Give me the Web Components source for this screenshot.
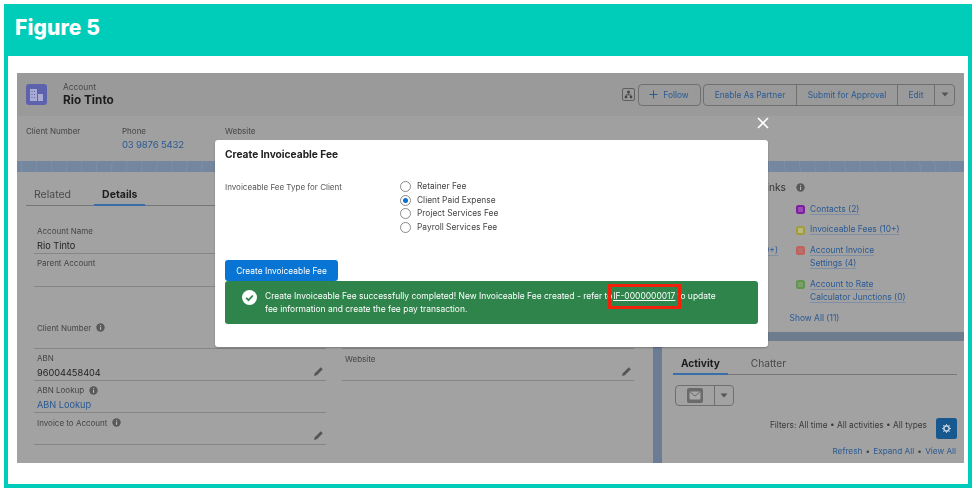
<!DOCTYPE html>
<html lang="en"><head><meta charset="utf-8"><title>Figure 5</title>
<style>
html,body{margin:0;padding:0;background:#fff}
body{font-family:Inter,"Liberation Sans",sans-serif;width:976px;height:492px;overflow:hidden}
</style></head><body>
<fig-frame heading="Figure 5">
  <sf-app>
    <sf-record-header slot="header" type="Account" name="Rio Tinto"></sf-record-header>
    <sf-highlights slot="highlights"></sf-highlights>
    <sf-details slot="left"></sf-details>
    <sf-quick-links slot="rtop"></sf-quick-links>
    <sf-activity slot="rbottom"></sf-activity>
    <sf-modal slot="modal"></sf-modal>
  </sf-app>
</fig-frame>
<script>
const ICON={
 info:'<svg width="9" height="9" viewBox="0 0 9 9"><circle cx="4.5" cy="4.5" r="4.2" fill="#5a5a5a"/><rect x="4" y="4" width="1.1" height="2.8" fill="#bdbdbd"/><rect x="4" y="2.2" width="1.1" height="1.1" fill="#bdbdbd"/></svg>',
 pencil:'<svg width="11" height="11" viewBox="0 0 11 11"><path d="M7.8 1.2l2 2-6 6-2.8.8.8-2.8z" fill="#555"/></svg>',
 caret:'<svg width="8" height="5" viewBox="0 0 8 5"><path d="M.5.5h7L4 4.6z" fill="#555"/></svg>'
};
function def(name,html){
  customElements.define(name,class extends HTMLElement{
    connectedCallback(){
      if(this.shadowRoot)return;
      const r=this.attachShadow({mode:'open'});
      r.innerHTML=typeof html==='function'?html(this):html;
    }
  });
}
def('fig-frame',h=>`<style>
:host{display:flex;flex-direction:column;box-sizing:border-box;margin:4px;width:968px;height:484px;border:4px solid #00cdb9;background:#fff}
header{height:48px;background:#00cdb9;color:#fff;font:800 21px/40px Inter,sans-serif;letter-spacing:.1px;padding:0 0 0 7px;flex:none;box-sizing:border-box}
.b{flex:1;padding:17px 4px 21px 9px;min-height:0}
</style><header>${h.getAttribute('heading')}</header><div class="b"><slot></slot></div>`);

def('sf-app',`<style>
:host{display:grid;grid-template-columns:636px 9px 302px;grid-template-rows:43px 45px 11px 160px 9px 122px;height:390px;width:947px;position:relative;background:#6c7c94;color:#333;overflow:hidden;filter:blur(.5px);font:8.4px/12px Inter,sans-serif}
::slotted([slot=header]){grid-column:1/4;grid-row:1}
::slotted([slot=highlights]){grid-column:1/4;grid-row:2}
::slotted([slot=left]){grid-column:1;grid-row:4/7}
::slotted([slot=rtop]){grid-column:3;grid-row:4}
::slotted([slot=rbottom]){grid-column:3;grid-row:6}
.band{grid-column:1/4;grid-row:3;background:repeating-radial-gradient(circle at 40% 200%,#75869f 0 14px,#7c8da5 14px 15px)}
.col{grid-column:2;grid-row:4/7;background:#6c7c94}
.band2{grid-column:3;grid-row:5;background:#6e7d8e}
</style><slot name="header"></slot><slot name="highlights"></slot><div class="band"></div><div class="col"></div><div class="band2"></div><slot name="left"></slot><slot name="rtop"></slot><slot name="rbottom"></slot><slot name="modal"></slot>`);

def('sf-btn',`<style>
:host{display:flex;align-items:center;justify-content:center;box-sizing:border-box;height:20px;border-left:1px solid #6f6f6f;color:#2a5a94;font:8.4px/12px Inter,sans-serif;white-space:nowrap}
:host(:first-child){border-left:0}
</style><slot></slot>`);
def('sf-btn-group',`<style>
:host{display:flex;box-sizing:border-box;height:22px;border:1px solid #6f6f6f;border-radius:4px}
</style><slot></slot>`);

def('sf-record-header',h=>`<style>
:host{display:flex;align-items:center;background:#9a9a9a;padding:0 9px 0 9px;gap:16px}
.ic{width:21px;height:21px;flex:none;border-radius:3px;background:#5d62ad;display:flex;align-items:center;justify-content:center}
.t{flex:1;display:flex;flex-direction:column}
.a{font-size:8.4px;line-height:11px;color:#4a4a4a}
.n{font-size:11.8px;line-height:14px;font-weight:700;color:#1d1d1d}
.acts{display:flex;align-items:center;gap:2.5px}
.h{width:13px;height:13px;box-sizing:border-box;border:1px solid #5f5f5f;border-radius:2px;display:flex;align-items:center;justify-content:center}
</style>
<div class="ic"><svg width="13" height="12" viewBox="0 0 13 12" fill="#a9abd4"><path d="M0 0h7v12H0z"/><path d="M8 5h5v7H8z"/><path d="M1.5 2h1v1h-1zM4 2h1v1H4zM1.5 5h1v1h-1zM4 5h1v1H4zM1.5 8h1v1h-1zM4 8h1v1H4z" fill="#5d62ad"/></svg></div>
<div class="t"><span class="a">${h.getAttribute('type')}</span><span class="n">${h.getAttribute('name')}</span></div>
<div class="acts">
<div class="h"><svg width="9" height="9" viewBox="0 0 9 9" fill="#444"><path d="M3.2.8h2.6v2.4H3.2zM.8 5.8h2.4v2.4H.8zM5.8 5.8h2.4v2.4H5.8z"/><path d="M4.2 3h.6v1.6h2.4v1.4h-.6V5.2H2.4V6h-.6V4.6h2.4z"/></svg></div>
<sf-btn-group style="width:63px"><sf-btn style="width:100%;gap:5px"><svg width="9" height="9" viewBox="0 0 9 9"><path d="M4.5.5v8M.5 4.5h8" stroke="#2a5a94" stroke-width="1"/></svg>Follow</sf-btn></sf-btn-group>
<sf-btn-group><sf-btn style="width:92px">Enable As Partner</sf-btn><sf-btn style="width:101px">Submit for Approval</sf-btn><sf-btn style="width:37px">Edit</sf-btn><sf-btn style="width:20px">${ICON.caret}</sf-btn></sf-btn-group>
</div>`);

def('sf-highlight',h=>`<style>
:host{display:flex;flex-direction:column}
.l{font-size:8px;line-height:12px;color:#444;height:13px;box-sizing:border-box}
.v{font-size:9.6px;letter-spacing:-.2px;line-height:13px;color:#2a5a94}
</style><span class="l">${h.getAttribute('label')}</span><span class="v"><slot></slot></span>`);
def('sf-highlights',`<style>
:host{display:grid;grid-template-columns:96px 103px 1fr;background:#a0a0a0;padding:9px 9px 0}
</style><sf-highlight label="Client Number"></sf-highlight><sf-highlight label="Phone">03 9876 5432</sf-highlight><sf-highlight label="Website"></sf-highlight>`);

def('sf-tabs',h=>{const items=h.getAttribute('items').split(',');return `<style>
:host{display:flex;gap:15px;border-bottom:1px solid #767676;height:26px;box-sizing:border-box}
span{height:26px;box-sizing:border-box;padding:7.5px 8px 0;font:${h.getAttribute('fs')||10.2}px/13px Inter,sans-serif;color:#4a4a4a}
span.on{font-weight:700;color:#1d1d1d;border-bottom:2px solid #3a6ea8}
</style>${items.map((t,i)=>`<span class="${i==h.getAttribute('active')?'on':''}">${t}</span>`).join('')}`});

def('sf-field',h=>`<style>
:host{display:block;box-sizing:border-box;height:32px;border-bottom:1px solid #868686;padding:3.5px 3px 0;position:relative}
.l{display:flex;align-items:center;gap:5px;height:12px;font-size:8px;line-height:12px;color:#444}
.v{display:block;font-size:9.2px;line-height:13px;margin-top:2px;color:#222}
.v.link{color:#2a5a94}
.e{position:absolute;right:2px;bottom:3px;line-height:0}
</style><div class="l">${h.getAttribute('label')||''}${h.hasAttribute('info')?ICON.info:''}</div><span class="v ${h.hasAttribute('link')?'link':''}"><slot></slot></span>${h.hasAttribute('edit')?`<span class="e">${ICON.pencil}</span>`:''}`);

def('sf-details',`<style>
:host{display:block;background:#a2a2a2;padding:8px 19px 0 9px}
.g{display:grid;grid-template-columns:292px 292px;column-gap:16px;margin:16px 0 0 8px}
.t{padding-top:3px}
</style><sf-tabs items="Related,Details" active="1" fs="10.5"></sf-tabs>
<div class="g">
<sf-field label="Account Name" style="padding-top:3px">Rio Tinto</sf-field><sf-field></sf-field>
<sf-field label="Parent Account" style="height:33px;padding-top:3px"></sf-field><sf-field style="height:33px"></sf-field>
<sf-field label="Client Number" info style="height:62px;padding-top:34.5px"></sf-field><sf-field style="height:62px"></sf-field>
<sf-field label="ABN" edit style="padding-top:3px">96004458404</sf-field><sf-field label="Website" edit></sf-field>
<sf-field label="ABN Lookup" info link style="padding-top:3px">ABN Lookup</sf-field><div></div>
<sf-field label="Invoice to Account" info edit></sf-field><div></div>
</div>`);

def('sf-ql',h=>`<style>
:host{display:flex;gap:5px;align-items:flex-start;font:8.45px/13.5px Inter,sans-serif;color:#2a5a94}
i{width:9px;height:9px;border-radius:2.5px;flex:none;margin-top:2.5px;box-sizing:border-box;border:2px solid ${h.getAttribute('c')}}
span{text-decoration:underline;text-decoration-color:#7f8ea5;text-underline-offset:2px}
</style><i style="background:${h.getAttribute('f')||'#b0b0b0'}"></i><span><slot></slot></span>`);
def('sf-quick-links',`<style>
:host{display:grid;grid-template-columns:134px 1fr;grid-auto-rows:auto;row-gap:7px;background:#a2a2a2;padding:8px 0 0 0;align-content:start;font:8.45px/13.5px Inter,sans-serif}
.h{font-size:10.2px;line-height:15.7px;color:#333;text-align:right;white-space:nowrap;padding-right:10px}
.inf{line-height:0;padding-top:3px}
.lft{color:#2a5a94;text-align:right;padding-right:18px;text-decoration:underline;text-decoration-color:#7f8ea5;text-underline-offset:2px}
.sa{color:#2a5a94;grid-column:2;margin-left:-6.5px}
</style>
<div class="h">Related List Quick Links</div><div class="inf">${ICON.info}</div>
<div></div><sf-ql c="#7b1fa0" f="#9a4ab5">Contacts (2)</sf-ql>
<div></div><sf-ql c="#a09e3a" f="#b9b97e">Invoiceable Fees (10+)</sf-ql>
<div class="lft">Opportunities (9+)</div><sf-ql c="#c2605c" f="#b9706c">Account Invoice<br>Settings (4)</sf-ql>
<div></div><sf-ql c="#5f9550" f="#7d9f68">Account to Rate<br>Calculator Junctions (0)</sf-ql>
<div class="sa">Show All (11)</div>`);

def('sf-activity',`<style>
:host{display:block;background:#a2a2a2;padding:8px 7px 0 11px;font:8.3px/14px Inter,sans-serif}
.split{display:flex;width:59px;height:21px;box-sizing:border-box;margin:10px 0 12px 2px;border:1px solid #6f6f6f;border-radius:4px}
.m{width:38px;display:flex;align-items:center;justify-content:center;border-right:1px solid #6f6f6f}
.c{flex:1;display:flex;align-items:center;justify-content:center}
.mi{width:16px;height:15px;background:#6a6a6a;border-radius:2px;display:flex;align-items:center;justify-content:center}
.f{display:flex;justify-content:flex-end;gap:9px;color:#3a3a3a;height:21px}
.gear{width:21px;height:21px;border-radius:2.5px;background:#17598f;display:flex;align-items:center;justify-content:center}
.l{display:flex;justify-content:flex-end;gap:3.2px;color:#2a5a94;margin-top:5px;padding-right:1px;font-size:8.2px}
.l b{font-weight:400;color:#444}
</style>
<sf-tabs items="Activity,Chatter" active="0"></sf-tabs>
<div class="split"><div class="m"><div class="mi"><svg width="12" height="9" viewBox="0 0 12 9"><rect x=".5" y=".5" width="11" height="8" rx="1" fill="#a8a8a8"/><path d="M1 1l5 4 5-4" fill="none" stroke="#6a6a6a"/></svg></div></div><div class="c">${ICON.caret}</div></div>
<div class="f"><span>Filters: All time • All activities • All types</span><div class="gear"><svg width="9" height="9" viewBox="0 0 9 9"><circle cx="4.5" cy="4.5" r="2.6" fill="none" stroke="#b9cbdd" stroke-width="1.6"/><path d="M4.5 0v9M0 4.5h9M1.3 1.3l6.4 6.4M7.7 1.3L1.3 7.7" stroke="#b9cbdd" stroke-width="1" stroke-dasharray="1.5 6 1.5"/></svg></div></div>
<div class="l"><span>Refresh</span><b>•</b><span>Expand All</span><b>•</b><span>View All</span></div>`);

def('sf-radio',h=>`<style>
:host{display:flex;align-items:center;gap:6px;height:13.7px;font:8.4px/13px Inter,sans-serif;color:#444}
i{width:11px;height:11px;box-sizing:border-box;border-radius:50%;border:1px solid #8a8a8a;background:#fff;display:flex;align-items:center;justify-content:center}
b{width:5px;height:5px;border-radius:50%;background:#0b6fd3}
</style><i>${h.hasAttribute('checked')?'<b></b>':''}</i><slot></slot>`);

def('sf-modal',`<style>
:host{position:absolute;left:198px;top:66.5px;width:553px;height:207.5px;box-sizing:border-box;background:#fff;border-radius:3px;padding:7px 10px 0;color:#222;display:flex;flex-direction:column;box-shadow:0 1px 2px rgba(0,0,0,.25)}
.x{position:absolute;left:542px;top:-23px;line-height:0}
h2{margin:0;font:700 10.2px/14px Inter,sans-serif;color:#222}
.row{display:flex;margin-top:19px;height:75px}
.lb{width:175px;font-size:8px;line-height:14px;color:#555;padding-top:.5px}
.opts{display:flex;flex-direction:column}
.btn{align-self:flex-start;width:113px;height:21px;background:#0874d4;color:#fff;border-radius:3px;display:flex;align-items:center;justify-content:center;font-size:8.4px;margin-top:5.5px}
.ok{background:#2e844a;color:#fff;height:42.5px;border-radius:3px;display:flex;align-items:flex-start;padding:8.5px 0 0 17px;box-sizing:border-box;font-size:8.47px;line-height:13px;gap:8px}
.ok svg{flex:none}
a{color:#fff;text-decoration:underline;position:relative;margin-left:-1.5px}
a::after{content:"";position:absolute;left:-5px;right:-6px;top:-7px;bottom:-8px;border:3px solid #f2200a}
.txt{white-space:nowrap}
</style>
<div class="x"><svg width="12" height="12" viewBox="0 0 12 12"><path d="M1 1l10 10M11 1L1 11" stroke="#fff" stroke-width="1.6"/></svg></div>
<h2>Create Invoiceable Fee</h2>
<div class="row"><div class="lb">Invoiceable Fee Type for Client</div>
<div class="opts"><sf-radio>Retainer Fee</sf-radio><sf-radio checked>Client Paid Expense</sf-radio><sf-radio>Project Services Fee</sf-radio><sf-radio>Payroll Services Fee</sf-radio></div></div>
<div class="btn">Create Invoiceable Fee</div>
<div class="ok"><svg width="15" height="15" viewBox="0 0 15 15"><circle cx="7.5" cy="7.5" r="7.5" fill="#fff"/><path d="M4.2 7.8l2.3 2.3 4.3-4.6" fill="none" stroke="#2e844a" stroke-width="1.8"/></svg>
<div class="txt">Create Invoiceable Fee successfully completed! New Invoiceable Fee created - refer to <a>IF-0000000017</a> to update<br>fee information and create the fee pay transaction.</div></div>`);
</script>
</body></html>
